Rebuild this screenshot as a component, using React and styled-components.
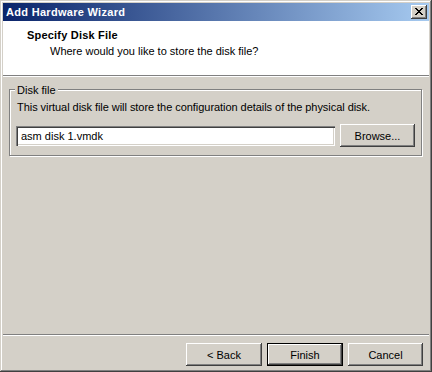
import styled, { createGlobalStyle } from "styled-components";

const GlobalStyle = createGlobalStyle`
  body {
    margin: 0;
    background: #fff;
  }
`;

const Window = styled.div`
  width: 432px;
  height: 372px;
  box-sizing: border-box;
  padding: 3px;
  background: #d4d0c8;
  box-shadow: inset -1px -1px 0 #404040, inset 1px 1px 0 #d4d0c8,
    inset -2px -2px 0 #808080, inset 2px 2px 0 #fff;
  display: flex;
  flex-direction: column;
  font-family: "Liberation Sans", Tahoma, sans-serif;
  font-size: 11px;
  color: #000;
`;

const TitleBar = styled.div`
  height: 18px;
  flex-shrink: 0;
  display: flex;
  align-items: center;
  justify-content: space-between;
  padding: 0 2px 0 3px;
  background: linear-gradient(to right, #0a246a, #a6caf0);
`;

const TitleText = styled.span`
  color: #fff;
  font-weight: bold;
  font-size: 11px;
  letter-spacing: 0.3px;
`;

const CloseButton = styled.div`
  width: 16px;
  height: 14px;
  box-sizing: border-box;
  background: #d4d0c8;
  box-shadow: inset -1px -1px 0 #404040, inset 1px 1px 0 #fff,
    inset -2px -2px 0 #808080;
  display: flex;
  align-items: center;
  justify-content: center;
  padding-bottom: 1px;
`;

const Header = styled.div`
  height: 54px;
  flex-shrink: 0;
  box-sizing: border-box;
  background: #fff;
  padding: 8px 0 0 24px;
`;

const Heading = styled.div`
  font-weight: bold;
  line-height: 13px;
  letter-spacing: 0.2px;
`;

const SubHeading = styled.div`
  line-height: 13px;
  margin: 3px 0 0 23px;
`;

const Rule = styled.div`
  flex-shrink: 0;
  height: 0;
  border-top: 1px solid #808080;
  border-bottom: 1px solid #fff;
`;

const Main = styled.div`
  flex: 1;
  display: flex;
  flex-direction: column;
`;

const Group = styled.div`
  position: relative;
  margin: 12px 7px 0 6px;
  padding: 11px 6px 8px 6px;
  border: 1px solid #808080;
  box-shadow: inset 1px 1px 0 #fff, 1px 1px 0 #fff;
`;

const Legend = styled.span`
  position: absolute;
  top: -6px;
  left: 5px;
  padding: 0 2px;
  line-height: 13px;
  background: #d4d0c8;
`;

const Description = styled.div`
  line-height: 13px;
  margin-left: 1px;
  letter-spacing: -0.05px;
`;

const FileRow = styled.div`
  display: flex;
  align-items: center;
  gap: 5px;
  margin-top: 10px;
`;

const TextField = styled.input`
  flex: 1;
  min-width: 0;
  height: 20px;
  box-sizing: border-box;
  border: none;
  outline: none;
  padding: 0 0 0 5px;
  background: #fff;
  font: inherit;
  color: #000;
  box-shadow: inset 1px 1px 0 #808080, inset 2px 2px 0 #404040,
    inset -1px -1px 0 #fff, inset -2px -2px 0 #d4d0c8;
`;

const Button = styled.button`
  width: ${(p) => p.$width || 75}px;
  height: 23px;
  box-sizing: border-box;
  padding: 0;
  background: #d4d0c8;
  font: inherit;
  color: #000;
  border: ${(p) => (p.$default ? "1px solid #000" : "none")};
  box-shadow: inset -1px -1px 0 #404040, inset 1px 1px 0 #fff,
    inset -2px -2px 0 #808080;
`;

const Spacer = styled.div`
  flex: 1;
`;

const Footer = styled.div`
  display: flex;
  justify-content: flex-end;
  gap: 5px;
  padding: 7px 6px 3px 0;
`;

const xRows = ["11000011", "01100110", "00111100", "00011000", "00111100", "01100110", "11000011"];

const CloseGlyph = () => (
  <svg width="8" height="7" viewBox="0 0 8 7" shapeRendering="crispEdges">
    {xRows.map((row, y) =>
      row.split("").map((c, x) =>
        c === "1" ? <rect key={`${x}-${y}`} x={x} y={y} width="1" height="1" fill="#000" /> : null
      )
    )}
  </svg>
);

const App = () => {
  return (
    <Window>
      <GlobalStyle />
      <TitleBar>
        <TitleText>Add Hardware Wizard</TitleText>
        <CloseButton>
          <CloseGlyph />
        </CloseButton>
      </TitleBar>
      <Header>
        <Heading>Specify Disk File</Heading>
        <SubHeading>Where would you like to store the disk file?</SubHeading>
      </Header>
      <Rule />
      <Main>
        <Group>
          <Legend>Disk file</Legend>
          <Description>
            This virtual disk file will store the configuration details of the physical disk.
          </Description>
          <FileRow>
            <TextField defaultValue="asm disk 1.vmdk" />
            <Button $width={75}>Browse...</Button>
          </FileRow>
        </Group>
        <Spacer />
        <Rule />
        <Footer>
          <Button $width={76}>&lt; Back</Button>
          <Button $width={76} $default>Finish</Button>
          <Button>Cancel</Button>
        </Footer>
      </Main>
    </Window>
  );
};

export default App;
